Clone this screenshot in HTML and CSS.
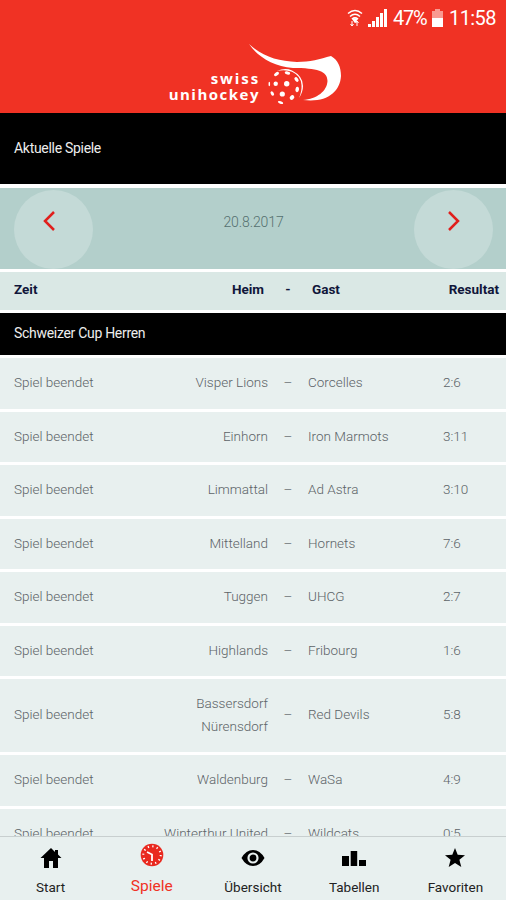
FILE: index.html
```html
<!DOCTYPE html>
<html lang="de">
<head>
    <meta charset="UTF-8">
    <meta name="viewport" content="width=device-width, initial-scale=1.0">
    <title>swiss unihockey - Aktuelle Spiele</title>
    <link rel="stylesheet" href="styles.css">
</head>
<body>
<div class="app">
    <header class="header">
        <div class="status">
            <svg class="wifi" width="16" height="18" viewBox="0 0 16 18" fill="none" stroke="#fff" stroke-width="1.5">
                <path d="M1 4.5Q8-1.5 15 4.5M3 7.5Q8 3 13 7.5M5 10Q8 7.5 11 10"/>
                <path d="M6 10l2 3 2-3z" fill="#fff"/>
                <path d="M5 12v5M3.500 15l1.500 2 1.500-2M10 17v-5M8.500 14l1.500-2 1.500 2" stroke-width="1"/>
            </svg>
            <svg class="signal" width="19" height="18" viewBox="0 0 19 18" fill="#fff">
                <path d="M0 15h3v3H0zM4 12h3v6H4zM8 8h3v10H8zM12 4h3v14h-3zM16 0h3v18h-3z"/>
            </svg>
            <span class="percent">47%</span>
            <svg class="battery" width="11" height="18" viewBox="0 0 11 18">
                <path d="M3 0h5v2h3v16H0V2h3z" fill="#f99a91"/>
                <path d="M0 9h11v9H0z" fill="#fff"/>
            </svg>
            <span class="clock">11:58</span>
        </div>
        <div class="logo">
            <div class="logo-text"><span class="swiss">swiss</span><span>unihockey</span></div>
            <svg width="96" height="64" viewBox="0 0 96 64">
                <!-- stick -->
                <path d="M2 1C16 14 31 18 50 19C63 19 73 16 84 13C91 17 94 24 94 33C93 49 80 60 56 57C70 56 80 48 80.500 38C80.500 28 70 25 46 25C26 23 11 14 2 1Z" fill="#fff"/>
                <!-- ball -->
                <path d="M30 28Q38 24.500 45 27.500Q56 33 56 43Q56 49 52 55Q55 48 54.500 42Q54 33 45 28.800Q38 26 30 28Z" fill="#fff"/>
                <g fill="#fff">
                    <ellipse cx="29.500" cy="31" rx="2.800" ry="1.600" transform="rotate(-35 29.500 31)"/>
                    <ellipse cx="40.500" cy="30" rx="2.700" ry="1.600" transform="rotate(10 40.500 30)"/>
                    <ellipse cx="49.500" cy="36.500" rx="1.700" ry="2.600" transform="rotate(-40 49.500 36.500)"/>
                    <ellipse cx="22.300" cy="41" rx="0.800" ry="2.200"/>
                    <circle cx="28.700" cy="40.700" r="2.200"/>
                    <circle cx="39.700" cy="40.700" r="2.700"/>
                    <ellipse cx="50.200" cy="46.500" rx="1.800" ry="2.700" transform="rotate(10 50.200 46.500)"/>
                    <circle cx="35.300" cy="51" r="2.600"/>
                    <ellipse cx="25.300" cy="50.500" rx="1.500" ry="2.400" transform="rotate(-30 25.300 50.500)"/>
                    <ellipse cx="45" cy="54.500" rx="2" ry="2.600" transform="rotate(45 45 54.500)"/>
                    <ellipse cx="33.500" cy="59.500" rx="2.800" ry="1.200" transform="rotate(20 33.500 59.500)"/>
                </g>
            </svg>
        </div>
    </header>

    <h1 class="title">Aktuelle Spiele</h1>

    <div class="date-bar">
        <button class="arrow" aria-label="Zurück">
            <svg width="12" height="20" viewBox="0 0 12 20"><path d="M11 1L2 10l9 9"/></svg>
        </button>
        <span class="date">20.8.2017</span>
        <button class="arrow" aria-label="Weiter">
            <svg width="12" height="20" viewBox="0 0 12 20"><path d="M1 1l9 9-9 9"/></svg>
        </button>
    </div>

    <div class="table-head">
        <span>Zeit</span><span class="home">Heim</span><span class="dash">-</span><span>Gast</span><span class="result">Resultat</span>
    </div>

    <h2 class="league">Schweizer Cup Herren</h2>

    <div class="games">
        <div class="game"><span>Spiel beendet</span><span class="home">Visper Lions</span><span class="dash">–</span><span>Corcelles</span><span>2:6</span></div>
        <div class="game"><span>Spiel beendet</span><span class="home">Einhorn</span><span class="dash">–</span><span>Iron Marmots</span><span>3:11</span></div>
        <div class="game"><span>Spiel beendet</span><span class="home">Limmattal</span><span class="dash">–</span><span>Ad Astra</span><span>3:10</span></div>
        <div class="game"><span>Spiel beendet</span><span class="home">Mittelland</span><span class="dash">–</span><span>Hornets</span><span>7:6</span></div>
        <div class="game"><span>Spiel beendet</span><span class="home">Tuggen</span><span class="dash">–</span><span>UHCG</span><span>2:7</span></div>
        <div class="game"><span>Spiel beendet</span><span class="home">Highlands</span><span class="dash">–</span><span>Fribourg</span><span>1:6</span></div>
        <div class="game"><span>Spiel beendet</span><span class="home">Bassersdorf<br>Nürensdorf</span><span class="dash">–</span><span>Red Devils</span><span>5:8</span></div>
        <div class="game"><span>Spiel beendet</span><span class="home">Waldenburg</span><span class="dash">–</span><span>WaSa</span><span>4:9</span></div>
        <div class="game"><span>Spiel beendet</span><span class="home">Winterthur United</span><span class="dash">–</span><span>Wildcats</span><span>0:5</span></div>
    </div>

    <nav class="tabs">
        <a class="tab" href="#">
            <svg width="22" height="22" viewBox="0 0 22 22"><path d="M11 1L0.500 11H4v10h5v-7h4v7h5V11h3.500L18 7.500V3h-3v2z"/></svg>
            <span>Start</span>
        </a>
        <a class="tab active" href="#">
            <svg width="24" height="24" viewBox="0 0 24 24">
                <circle cx="12" cy="12" r="11.300"/>
                <circle cx="12" cy="12" r="8.700" fill="none" stroke="#fff" stroke-width="2" stroke-dasharray="1.300 3.255"/>
                <path d="M7 9l5 2.500V18" fill="none" stroke="#fff" stroke-width="1.800"/>
            </svg>
            <span>Spiele</span>
        </a>
        <a class="tab" href="#">
            <svg width="24" height="22" viewBox="0 0 24 22">
                <path d="M0.500 11Q5 3 12 3t11.500 8Q19 19 12 19T0.500 11z"/>
                <circle cx="12" cy="11" r="4.500" fill="none" stroke="#e8f0ef" stroke-width="2.200"/>
            </svg>
            <span>Übersicht</span>
        </a>
        <a class="tab" href="#">
            <svg width="24" height="22" viewBox="0 0 24 22"><path d="M0 9h7v10H0zM8.700 4h6.500v15H8.700zM17 13h7v6h-7z"/></svg>
            <span>Tabellen</span>
        </a>
        <a class="tab" href="#">
            <svg width="22" height="22" viewBox="0 0 22 22"><path d="M11 1l2.700 6.700 7.300.5-5.600 4.600 1.900 7.200L11 16.100 4.700 20l1.900-7.200L1 8.200l7.300-.5z"/></svg>
            <span>Favoriten</span>
        </a>
    </nav>
</div>
</body>
</html>
```

FILE: styles.css
```css
:root {
    --red: #f03224;
    --row: #e8f0ef;
    --gap: 3px;
}
body {
    margin: 0;
    background: #fff;
    font-family: Roboto, "Liberation Sans", sans-serif;
    font-size: 13.5px;
    font-weight: 300;
    color: #5c6367;
}
.app {
    height: 900px;
    overflow: hidden;
}
.header {
    height: 113px;
    background: var(--red);
    color: #fff;
}
.status {
    display: flex;
    align-items: center;
    justify-content: flex-end;
    height: 36px;
    padding-right: 11px;
    font-size: 20px;
    font-weight: 400;
}
.signal {
    margin: 0 6px 0 5px;
}
.percent {
    width: 35px;
    letter-spacing: -1.3px;
}
.battery {
    margin: 0 6px 0 4px;
}
.clock {
    width: 46px;
    letter-spacing: -0.6px;
}
.logo {
    display: flex;
    justify-content: flex-end;
    padding: 7px 163px 0 0;
}
.logo-text {
    display: flex;
    flex-direction: column;
    margin: 27px -13px 0 0;
    text-align: right;
    font: 700 15px/16px "Open Sans", sans-serif;
    letter-spacing: 1.5px;
}
.swiss {
    letter-spacing: 1.9px;
}
.title, .league {
    display: flex;
    align-items: center;
    margin: 0;
    padding: 0 14px 2px;
    box-sizing: border-box;
    background: #000;
    color: #eee;
    font-size: 14px;
    font-weight: 400;
    letter-spacing: -0.3px;
}
.title {
    height: 71px;
}
.league {
    height: 42px;
}
.date-bar {
    display: flex;
    justify-content: space-between;
    height: 81px;
    margin: 4px 0 var(--gap);
    padding: 2px 13px 0 14px;
    box-sizing: border-box;
    background: #b3cfcb;
}
.date {
    padding-top: 24px;
    font-size: 14px;
    color: #55706f;
    letter-spacing: -0.1px;
}
.arrow {
    display: flex;
    justify-content: center;
    width: 79px;
    height: 79px;
    padding: 21px 9px 0 0;
    box-sizing: border-box;
    border: none;
    border-radius: 50%;
    background: #c4dad7;
}
.arrow:last-child {
    padding: 21px 0 0 2px;
}
.arrow path {
    fill: none;
    stroke: #e01f1c;
    stroke-width: 2.5;
}
.table-head, .game {
    display: grid;
    grid-template-columns: 154px 100px 40px 135px 1fr;
    align-items: center;
    padding-left: 14px;
}
.table-head {
    grid-template-columns: 150px 100px 48px 100px 1fr;
    height: 38px;
    margin-bottom: var(--gap);
    padding-right: 7px;
    padding-bottom: 4px;
    box-sizing: border-box;
    background: #dae8e5;
    color: #10163a;
    font-weight: 700;
}
.home, .result {
    text-align: right;
}
/* long team names grow to the left */
.home {
    justify-self: end;
    white-space: nowrap;
}
.dash {
    text-align: center;
}
.games {
    display: flex;
    flex-direction: column;
    gap: var(--gap);
    padding-top: var(--gap);
}
.game {
    padding-top: 13px;
    padding-bottom: 15px;
    line-height: 22.5px;
    background: var(--row);
}
.tabs {
    position: fixed;
    left: 0;
    right: 0;
    bottom: 0;
    display: grid;
    grid-template-columns: repeat(5, 1fr);
    height: 64px;
    box-sizing: border-box;
    border-top: 1px solid #c8cfcf;
    background: var(--row);
}
.tab {
    display: flex;
    flex-direction: column;
    align-items: center;
    padding-top: 10px;
    color: #222;
    font-size: 13.5px;
    font-weight: 400;
    text-decoration: none;
}
.tab span {
    margin-top: 10px;
    line-height: 16px;
}
.tab svg {
    fill: #000;
}
.active {
    padding-top: 6px;
    color: var(--red);
    font-size: 15.5px;
}
.active span {
    margin-top: 11px;
}
.active svg {
    fill: #e9291f;
}
```
